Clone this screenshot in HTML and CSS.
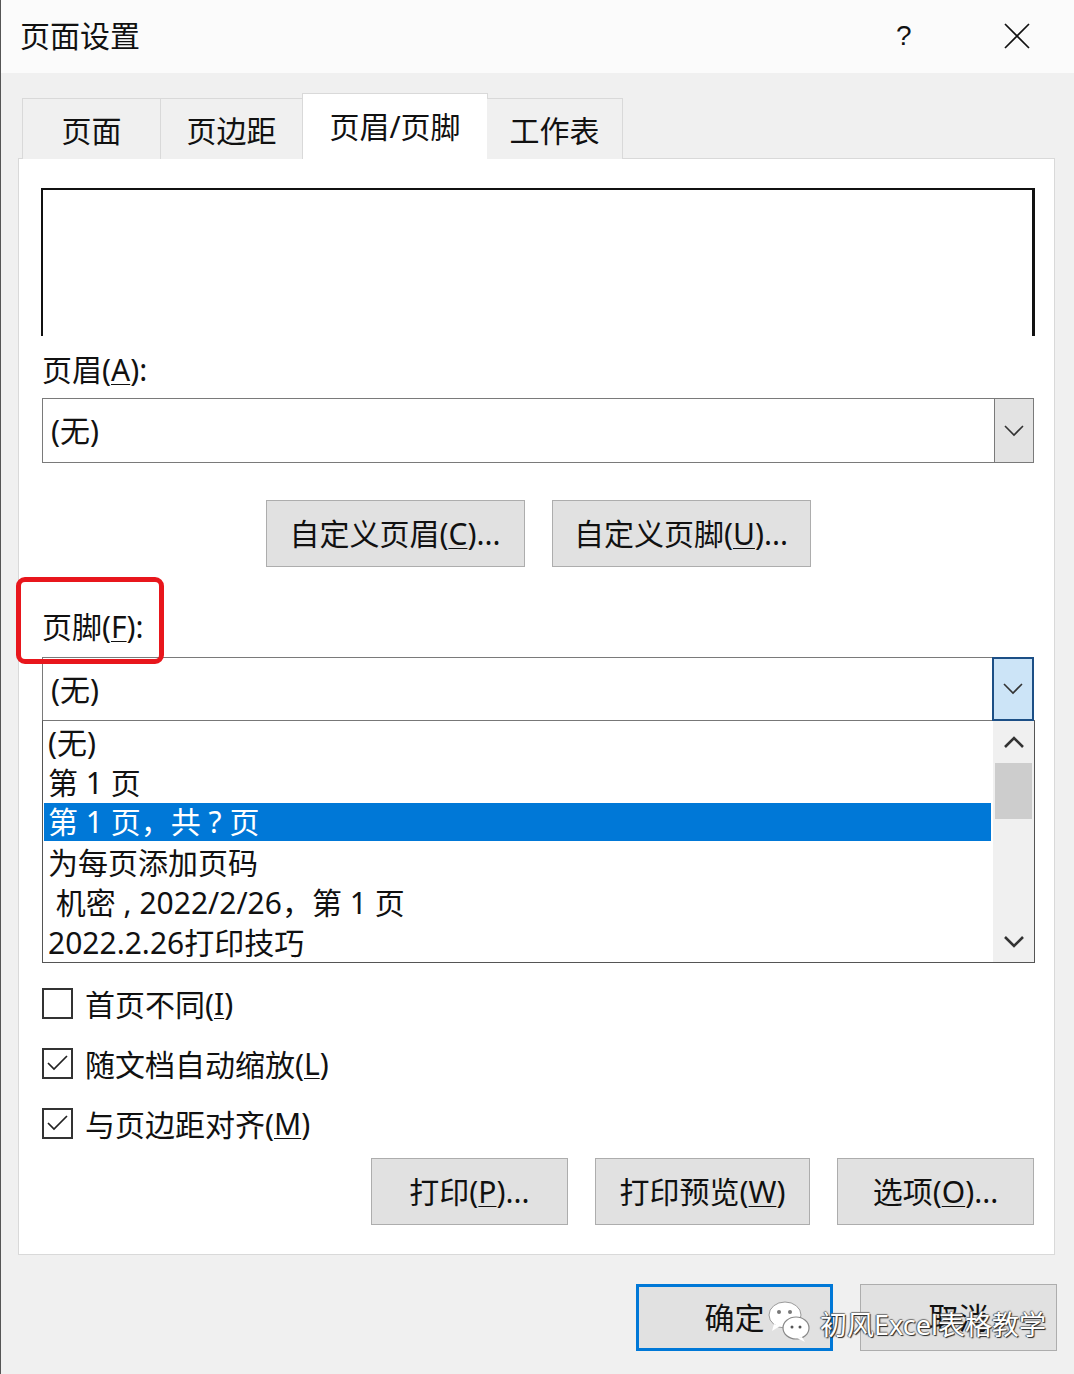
FILE: index.html
```html
<!DOCTYPE html>
<html>
<head>
    <meta charset="utf-8" />
    <title>页面设置</title>
    <link rel="stylesheet" href="styles.css">
</head>
<body>
<div class="window">
    <div class="titlebar">
        <span class="title">页面设置</span>
        <span class="help">?</span>
        <span class="close">
            <svg width="26" height="26" viewBox="0 0 26 26"><path d="M1 1 L25 25 M25 1 L1 25" stroke="#111" stroke-width="1.7" fill="none"/></svg>
        </span>
    </div>

    <div class="client">
        <div class="tabs">
            <div class="tab tab-page">页面</div>
            <div class="tab tab-margin">页边距</div>
            <div class="tab tab-hf active">页眉/页脚</div>
            <div class="tab tab-sheet">工作表</div>
        </div>

        <div class="panel">
            <div class="preview"></div>

            <div class="label">页眉(<u>A</u>):</div>
            <div class="combo">
                <span class="combo-text">(无)</span>
                <span class="combo-btn">
                    <svg width="20" height="12" viewBox="0 0 20 12"><polyline points="1,1 10,10 19,1" fill="none" stroke="#333" stroke-width="1.6"/></svg>
                </span>
            </div>

            <div class="row center">
                <div class="btn btn-custom">自定义页眉(<u>C</u>)...</div>
                <div class="btn btn-custom">自定义页脚(<u>U</u>)...</div>
            </div>

            <div class="label footer-label">页脚(<u>F</u>):<span class="mark"></span></div>
            <div class="combo focused">
                <span class="combo-text">(无)</span>
                <span class="combo-btn">
                    <svg width="20" height="12" viewBox="0 0 20 12"><polyline points="1,1 10,10 19,1" fill="none" stroke="#333" stroke-width="1.6"/></svg>
                </span>
            </div>
            <div class="list">
                <div class="items">
                    <div class="item">(无)</div>
                    <div class="item">第 1 页</div>
                    <div class="item selected">第 1 页，共 ? 页</div>
                    <div class="item">为每页添加页码</div>
                    <div class="item"> 机密 , 2022/2/26，第 1 页</div>
                    <div class="item">2022.2.26打印技巧</div>
                </div>
                <div class="scrollbar">
                    <span class="arrow">
                        <svg width="22" height="13" viewBox="0 0 22 13"><polyline points="2,11 11,2 20,11" fill="none" stroke="#333" stroke-width="2.6"/></svg>
                    </span>
                    <span class="thumb"></span>
                    <span class="track"></span>
                    <span class="arrow">
                        <svg width="22" height="13" viewBox="0 0 22 13"><polyline points="2,2 11,11 20,2" fill="none" stroke="#333" stroke-width="2.6"/></svg>
                    </span>
                </div>
            </div>

            <div class="checks">
                <label class="check"><span class="box"></span>首页不同(<u>I</u>)</label>
                <label class="check"><span class="box"><svg width="25" height="20" viewBox="0 0 25 20"><polyline points="3,10 9,16 22,3" fill="none" stroke="#222" stroke-width="1.7"/></svg></span>随文档自动缩放(<u>L</u>)</label>
                <label class="check"><span class="box"><svg width="25" height="20" viewBox="0 0 25 20"><polyline points="3,10 9,16 22,3" fill="none" stroke="#222" stroke-width="1.7"/></svg></span>与页边距对齐(<u>M</u>)</label>
            </div>

            <div class="row right print-row">
                <div class="btn btn-print">打印(<u>P</u>)...</div>
                <div class="btn btn-preview">打印预览(<u>W</u>)</div>
                <div class="btn btn-print">选项(<u>O</u>)...</div>
            </div>
        </div>

        <div class="row right dlg-buttons">
            <div class="btn btn-print default">确定</div>
            <div class="btn btn-print">取消</div>
        </div>
    </div>

    <div class="watermark">
        <svg width="46" height="44" viewBox="0 0 46 44">
            <ellipse cx="19" cy="16" rx="16" ry="13" fill="#fff" stroke="#9a9a9a" stroke-width="1"/>
            <path d="M8 25 L6 32 L14 27 Z" fill="#fff"/>
            <circle cx="13" cy="13" r="2" fill="#777"/>
            <circle cx="24" cy="13" r="2" fill="#777"/>
            <ellipse cx="30" cy="29" rx="13" ry="11" fill="#fff" stroke="#888" stroke-width="1.2"/>
            <path d="M36 38 L39 43 L31 39 Z" fill="#fff"/>
            <circle cx="26" cy="28" r="1.5" fill="#555"/>
            <circle cx="34" cy="28" r="1.5" fill="#555"/>
        </svg>
        <span class="wm-text">初风Excel表格教学</span>
    </div>
</div>
</body>
</html>
```

FILE: styles.css
```css
body {margin: 0; background: #f0f0f0;}
u {text-decoration: underline; text-underline-offset: 3px; text-decoration-thickness: 1px;}

.window {
    position: relative;
    width: 1074px;
    height: 1374px;
    box-sizing: border-box;
    border-left: 1px solid #555;
    background: #f0f0f0;
    color: #111;
    font-family: "Noto Sans", "Noto Sans CJK SC", sans-serif;
    font-size: 30px;
    overflow: hidden;}

/* title bar */
.titlebar {
    display: flex;
    align-items: center;
    height: 73px;
    padding-left: 19px;
    background: #fbfbfb;}
.title {flex: 1; line-height: 40px; margin-top: -2px;}
.help {width: 14px; font-size: 28px; font-family: "Liberation Sans", sans-serif; margin-right: 94px; margin-top: -1px;}
.close {display: flex; margin-right: 44px; margin-top: -2px;}

/* tabs */
.client {padding-top: 21px;}
.tabs {
    display: flex;
    align-items: flex-end;
    padding-left: 21px;
    height: 65px;
    position: relative;
    z-index: 2;
    margin-bottom: -1px;}
.tab {
    box-sizing: border-box;
    height: 61px;
    border: 1px solid #d9d9d9;
    border-bottom: none;
    border-right: none;
    background: #f0f0f0;
    text-align: center;
    line-height: 64px;}
.tab-sheet {border-right: 1px solid #d9d9d9;}
.tab-page {width: 138px;}
.tab-margin {width: 142px;}
.tab-hf {width: 186px;}
.tab-sheet {width: 136px;}
.tab.active {
    height: 66px;
    background: #fff;
    border-right: 1px solid #d9d9d9;
    line-height: 66px;
    margin-right: -1px;}
.tab.active + .tab {border-left: none;}

/* tab page */
.panel {
    position: relative;
    margin-left: 17px;
    width: 1037px;
    box-sizing: border-box;
    background: #fff;
    border: 1px solid #d9d9d9;
    padding: 29px 20px 29px 23px;}
.preview {
    height: 146px;
    margin: 0 -1px 0 -1px;
    border-top: 2px solid #111;
    border-left: 2px solid #111;
    border-right: 3px solid #111;}

.label {position: relative; line-height: 40px; margin: 14px 0 8px 0;}
.footer-label {margin: 40px 0 10px 0;}
.mark {
    position: absolute;
    left: -26px;
    top: -30px;
    width: 138px;
    height: 77px;
    border: 5px solid #e8161c;
    border-radius: 9px;}

.combo {
    display: flex;
    height: 65px;
    box-sizing: border-box;
    border: 1px solid #7a7a7a;
    background: #fff;}
.combo-text {flex: 1; line-height: 63px; padding-left: 8px;}
.combo-btn {
    display: flex;
    align-items: center;
    justify-content: center;
    width: 40px;
    box-sizing: border-box;
    margin: -1px -1px -1px 0;
    border: 1px solid #7a7a7a;
    background: #e3e3e3;}
.combo.focused {height: 64px;}
.combo.focused .combo-btn {
    background: #cce4f7;
    border: 2px solid #1c4f86;
    width: 42px;}

/* list */
.list {
    display: flex;
    height: 243px;
    box-sizing: border-box;
    margin-top: -1px;
    margin-right: -1px;
    border: 1px solid #555;
    border-top: 1px solid #777;
    background: #fff;}
.items {flex: 1; padding-top: 2px;}
.item {height: 40px; line-height: 40px; padding-left: 5px; white-space: pre;}
.item.selected {background: #0078d7; color: #fff; height: 38px; line-height: 38px; margin: 0 2px 2px 1px; padding-left: 4px;}
.scrollbar {
    display: flex;
    flex-direction: column;
    align-items: center;
    width: 41px;
    background: #f0f0f0;}
.arrow {display: flex; align-items: center; justify-content: center; height: 42px;}
.thumb {width: 37px; height: 56px; background: #cdcdcd;}
.track {flex: 1;}

/* check boxes */
.checks {margin-top: 10px;}
.check {display: flex; align-items: center; height: 60px;}
.box {
    display: flex;
    align-items: center;
    justify-content: center;
    width: 31px;
    height: 31px;
    box-sizing: border-box;
    border: 2px solid #333;
    margin-right: 12px;}

/* buttons */
.row {display: flex; gap: 27px;}
.row.center {justify-content: center; margin-top: 37px;}
.row.right {justify-content: flex-end;}
.print-row {margin-top: 5px;}
.btn {
    height: 67px;
    box-sizing: border-box;
    border: 1px solid #adadad;
    background: #e1e1e1;
    text-align: center;
    line-height: 65px;}
.btn-custom {width: 259px;}
.btn-print {width: 197px;}
.btn-preview {width: 215px;}
.btn.default {border: 3px solid #0078d7; line-height: 61px;}
.dlg-buttons {margin-top: 29px; padding-right: 17px;}

/* watermark over the buttons */
.watermark {
    position: absolute;
    left: 765px;
    top: 1298px;
    display: flex;
    align-items: center;
    gap: 8px;
    color: #fff;
    font-size: 27px;
    text-shadow: 1px 1px 1px #222, -1px 0 1px #555, 0 -1px 1px #777;}
.wm-text {margin-top: 6px;}
```
